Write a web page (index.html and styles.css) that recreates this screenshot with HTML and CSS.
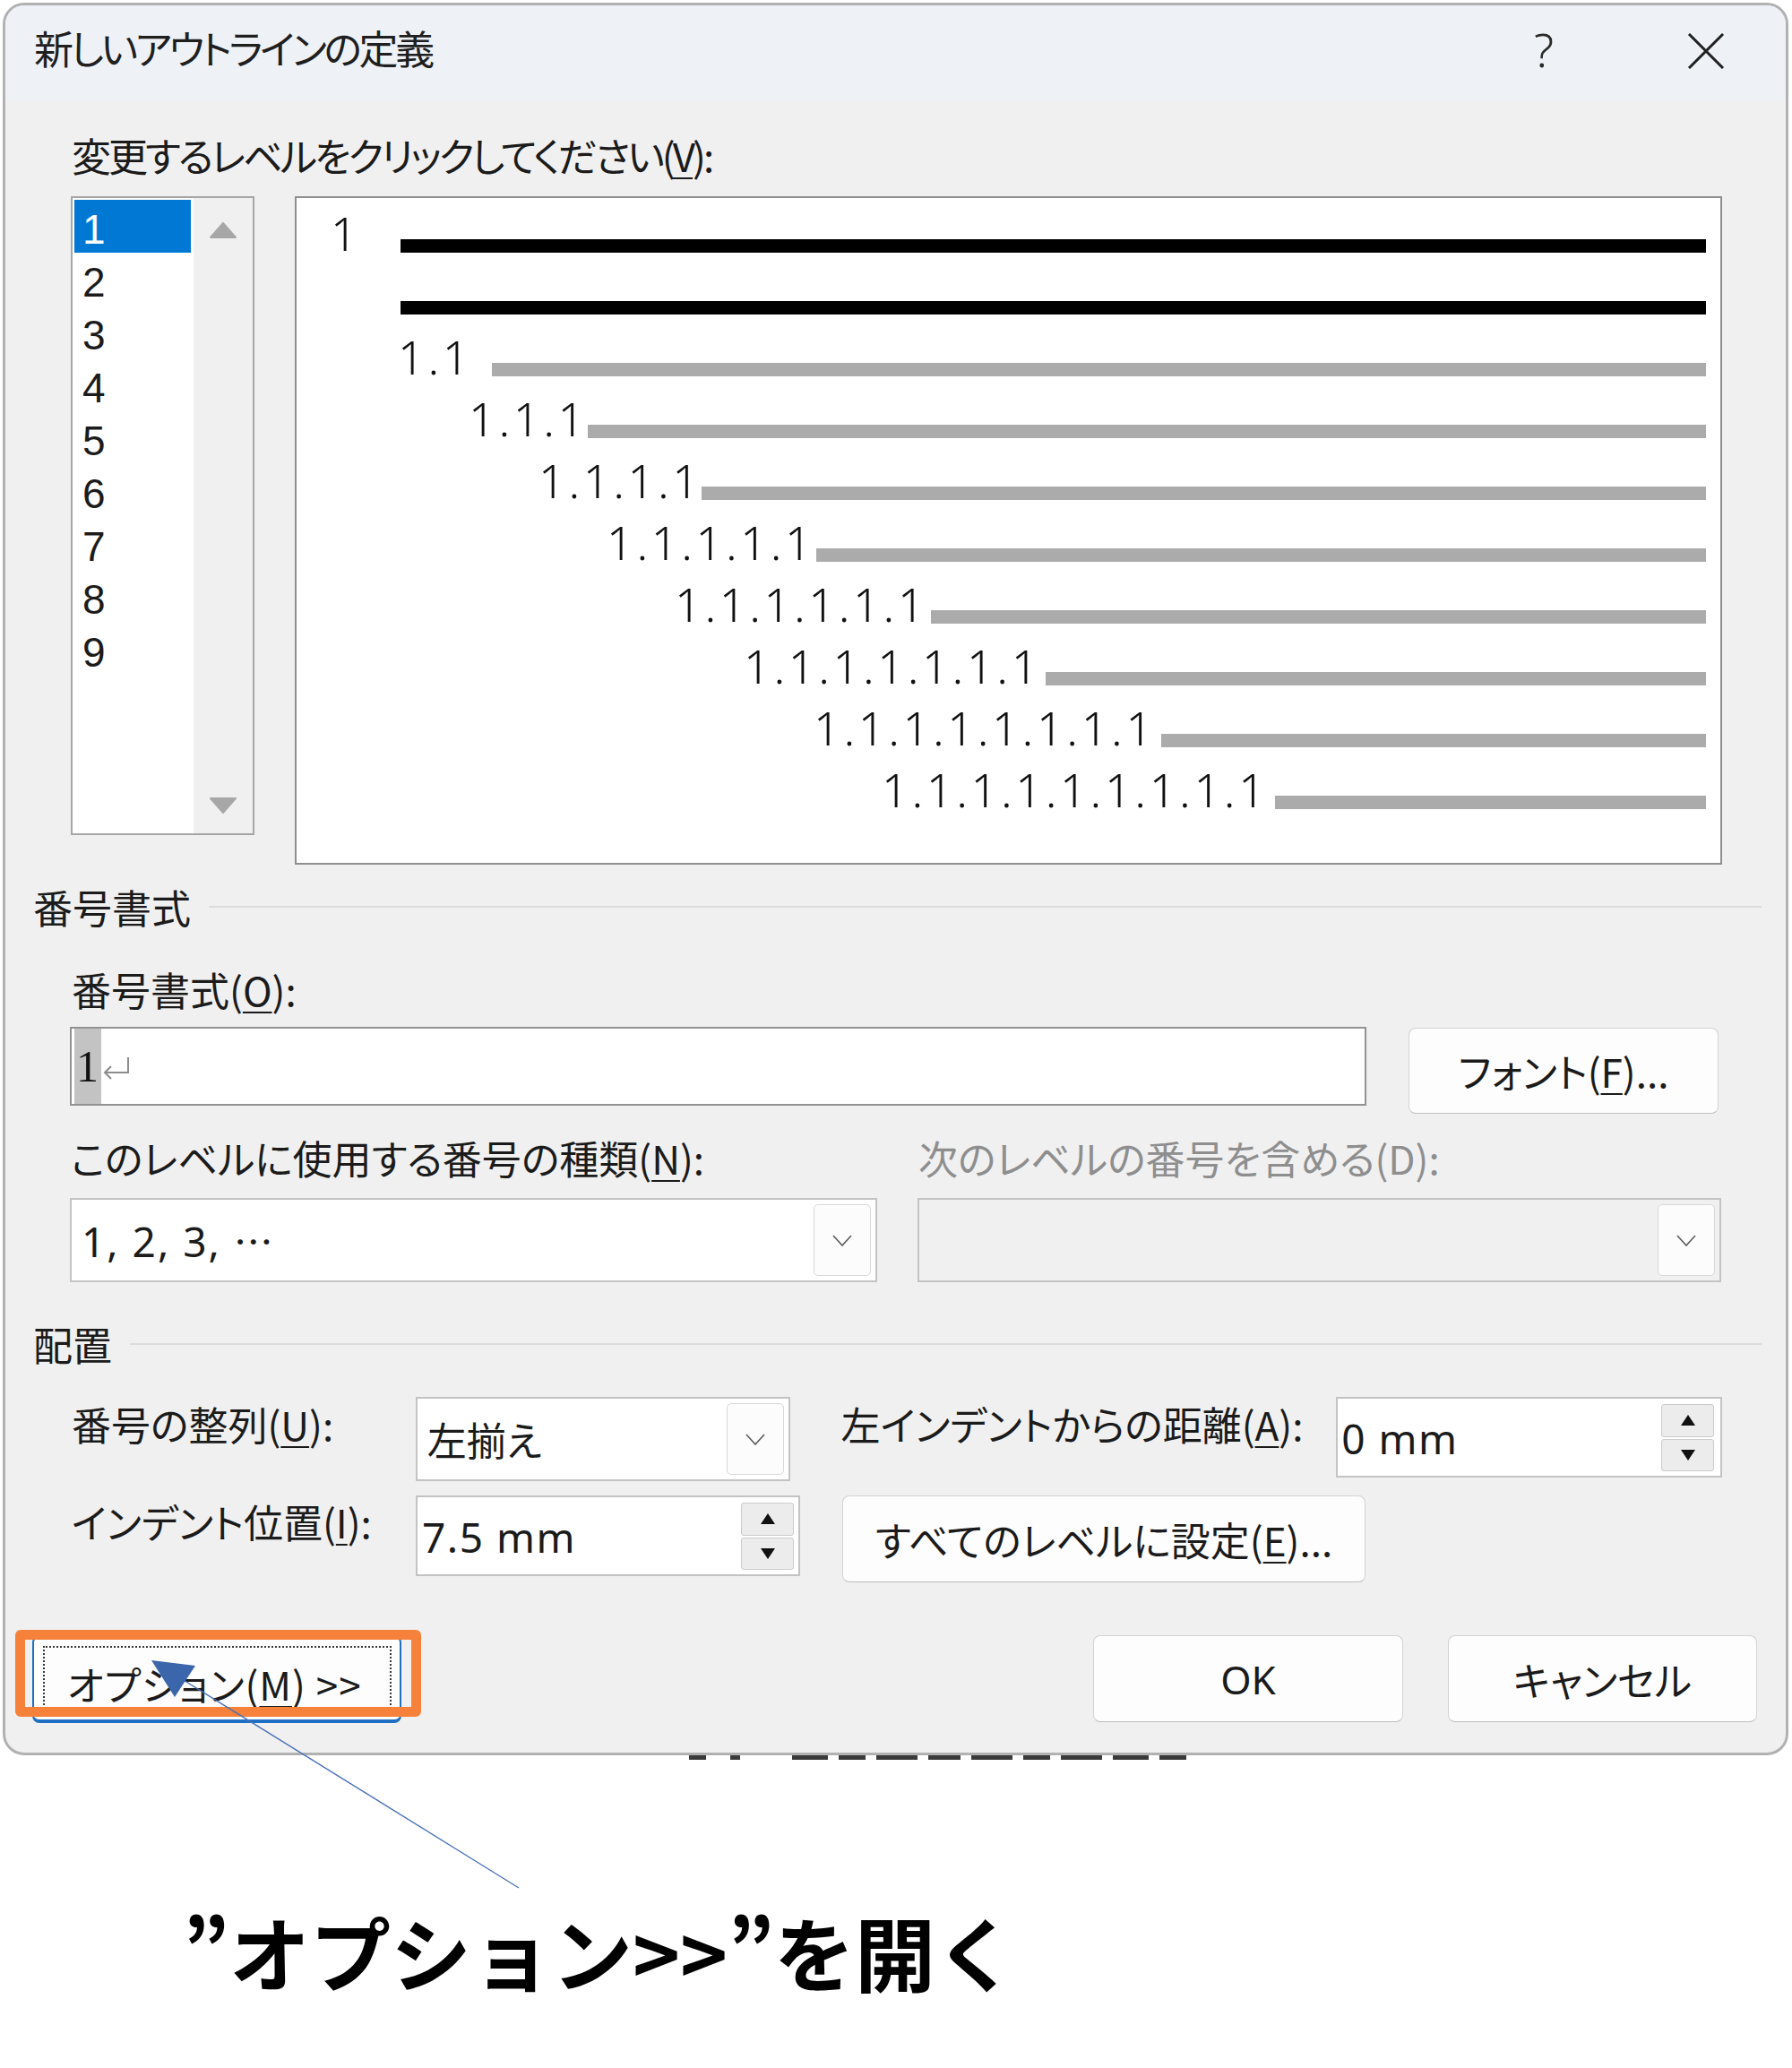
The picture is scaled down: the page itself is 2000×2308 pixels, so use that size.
FILE: index.html
```html
<!DOCTYPE html>
<html lang="ja">
<head>
<meta charset="utf-8">
<title>新しいアウトラインの定義</title>
<link rel="stylesheet" href="styles.css">
</head>
<body>
<div class="page">
  <div class="dialog">
    <div class="titlebar">
      <span class="title">新しいアウトラインの定義</span>
      <span class="help">?</span>
      <svg class="close" width="42" height="40" viewBox="0 0 42 40"><path d="M2 1 L40 39 M40 1 L2 39" stroke="#202020" stroke-width="3" fill="none"/></svg>
    </div>
    <div class="body">
      <div class="lbl first">変更するレベルをクリックしてください(<u>V</u>):</div>
      <div class="level-row">
        <div class="listbox">
          <div class="items">
            <div class="item sel">1</div>
            <div class="item">2</div>
            <div class="item">3</div>
            <div class="item">4</div>
            <div class="item">5</div>
            <div class="item">6</div>
            <div class="item">7</div>
            <div class="item">8</div>
            <div class="item">9</div>
          </div>
          <div class="vscroll">
            <svg width="30" height="18" viewBox="0 0 30 18"><path d="M15 1 L29 17 L1 17 Z" fill="#a7a7a7" stroke="#a7a7a7" stroke-width="2" stroke-linejoin="round"/></svg>
            <svg width="30" height="18" viewBox="0 0 30 18"><path d="M1 1 L29 1 L15 17 Z" fill="#a7a7a7" stroke="#a7a7a7" stroke-width="2" stroke-linejoin="round"/></svg>
          </div>
        </div>
        <div class="preview">
          <div class="prow r1"><span class="num">1</span><i class="bar k"></i></div>
          <div class="prow r2"><i class="bar k"></i></div>
          <div class="prow r3"><span class="num">1.1</span><i class="bar"></i></div>
          <div class="prow r4"><span class="num">1.1.1</span><i class="bar"></i></div>
          <div class="prow r5"><span class="num">1.1.1.1</span><i class="bar"></i></div>
          <div class="prow r6"><span class="num">1.1.1.1.1</span><i class="bar"></i></div>
          <div class="prow r7"><span class="num">1.1.1.1.1.1</span><i class="bar"></i></div>
          <div class="prow r8"><span class="num">1.1.1.1.1.1.1</span><i class="bar"></i></div>
          <div class="prow r9"><span class="num">1.1.1.1.1.1.1.1</span><i class="bar"></i></div>
          <div class="prow r10"><span class="num">1.1.1.1.1.1.1.1.1</span><i class="bar"></i></div>
        </div>
      </div>

      <div class="grp g1"><span>番号書式</span><i class="rule"></i></div>
      <div class="lbl l-fmt">番号書式(<u>O</u>):</div>
      <div class="fmt-row">
        <div class="fmt-input">
          <span class="hl">1</span>
          <svg class="ret" width="34" height="28" viewBox="0 0 34 28"><path d="M30 2 V19 H4 M11 12 L4 19 L11 26" stroke="#8c8c8c" stroke-width="2" fill="none"/></svg>
        </div>
        <div class="btn font-btn">フォント(<u>F</u>)...</div>
      </div>

      <div class="two-col">
        <div class="col">
          <div class="lbl">このレベルに使用する番号の種類(<u>N</u>):</div>
          <div class="combo wide">
            <span class="val latin">1, 2, 3, <span class="cjk">…</span></span>
            <span class="drop"><svg width="22" height="13" viewBox="0 0 22 13"><path d="M1 1 L11 12 L21 1" stroke="#5a5a5a" stroke-width="1.6" fill="none"/></svg></span>
          </div>
        </div>
        <div class="col">
          <div class="lbl dis">次のレベルの番号を含める(D):</div>
          <div class="combo wide disabled">
            <span class="val"></span>
            <span class="drop"><svg width="22" height="13" viewBox="0 0 22 13"><path d="M1 1 L11 12 L21 1" stroke="#5a5a5a" stroke-width="1.6" fill="none"/></svg></span>
          </div>
        </div>
      </div>

      <div class="grp g2"><span>配置</span><i class="rule"></i></div>

      <div class="pos-row ra">
        <div class="lbl plbl">番号の整列(<u>U</u>):</div>
        <div class="combo align">
          <span class="val">左揃え</span>
          <span class="drop"><svg width="22" height="13" viewBox="0 0 22 13"><path d="M1 1 L11 12 L21 1" stroke="#5a5a5a" stroke-width="1.6" fill="none"/></svg></span>
        </div>
        <div class="lbl plbl2">左インデントからの距離(<u>A</u>):</div>
        <div class="spin s-left">
          <span class="val">0 mm</span>
          <span class="btns">
            <span class="sb"><svg width="16" height="12" viewBox="0 0 16 12"><path d="M8 0 L16 12 L0 12 Z" fill="#111"/></svg></span>
            <span class="sb"><svg width="16" height="12" viewBox="0 0 16 12"><path d="M0 0 L16 0 L8 12 Z" fill="#111"/></svg></span>
          </span>
        </div>
      </div>

      <div class="pos-row rb">
        <div class="lbl plbl pb">インデント位置(<u>I</u>):</div>
        <div class="spin s-ind">
          <span class="val">7.5 mm</span>
          <span class="btns">
            <span class="sb"><svg width="16" height="12" viewBox="0 0 16 12"><path d="M8 0 L16 12 L0 12 Z" fill="#111"/></svg></span>
            <span class="sb"><svg width="16" height="12" viewBox="0 0 16 12"><path d="M0 0 L16 0 L8 12 Z" fill="#111"/></svg></span>
          </span>
        </div>
        <div class="btn all-btn">すべてのレベルに設定(<u>E</u>)...</div>
      </div>

      <div class="btn-row">
        <div class="btn opt-btn"><span class="focus">オプション(<u>M</u>) &gt;&gt;</span></div>
        <div class="btn ok-btn">OK</div>
        <div class="btn cancel-btn">キャンセル</div>
      </div>
    </div>
  </div>

  <div class="under">
    <i class="mk w19"></i><i class="mk w11 g27"></i><i class="mk w40 g58"></i><i class="mk w30"></i><i class="mk w46"></i><i class="mk w36"></i><i class="mk w46"></i><i class="mk w30"></i><i class="mk w46"></i><i class="mk w40"></i><i class="mk w30"></i>
  </div>

  <div class="caption">”オプション&gt;&gt;”を開く</div>

  <div class="hl-box"></div>
  <svg class="pointer" width="2000" height="2308" viewBox="0 0 2000 2308">
    <line x1="579" y1="2107" x2="195" y2="1869" stroke="#4a72b8" stroke-width="1.4"/>
    <polygon points="169,1853 218,1859 195,1894" fill="#3b66ab"/>
  </svg>
</div>
</body>
</html>
```

FILE: styles.css
```css
html, body {
  margin: 0;
  padding: 0;
  background: #ffffff;
}

body {
  font-family: "Noto Sans CJK JP", "Noto Sans", sans-serif;
}

.page {
  position: relative;
  width: 2000px;
  height: 2308px;
  overflow: hidden;
}

.dialog {
  margin: 3px 0 0 3px;
  width: 1993px;
  height: 1956px;
  box-sizing: border-box;
  border: 3px solid #b1b1b1;
  border-radius: 24px;
  background: #f0f0f0;
  overflow: hidden;
  font-size: 44px;
  color: #1b1b1b;
  font-feature-settings: "palt" 1;
}

.titlebar {
  height: 107px;
  box-sizing: border-box;
  background: #eef2f7;
  display: flex;
  align-items: flex-start;
  padding: 19px 68px 0 32px;
}

.title {
  flex: 1;
  line-height: 56px;
  color: #1f1f1f;
  letter-spacing: -3.3px;
}

.help {
  width: 30px;
  margin-right: 141px;
  font-family: "Noto Sans", sans-serif;
  font-weight: 300;
  font-size: 52px;
  line-height: 60px;
  color: #2a2a2a;
}

.close {
  margin-top: 12px;
  display: block;
}

.body {
  padding: 0 71px 0 73px;
}

u {
  text-decoration: underline;
  text-decoration-thickness: 2px;
  text-underline-offset: 6px;
}

.lbl {
  line-height: 56px;
  white-space: nowrap;
}

.lbl.first {
  margin-top: 32px;
  padding-left: 1px;
  letter-spacing: -3px;
}

.lbl.dis {
  color: #8e8e8e;
}

/* level list + preview */
.level-row {
  display: flex;
  align-items: flex-start;
  margin-top: 18px;
}

.listbox {
  width: 205px;
  height: 713px;
  box-sizing: border-box;
  border: 2px solid #a6a6a6;
  background: #ffffff;
  display: flex;
}

.items {
  width: 130px;
  margin: 2px 0 0 2px;
}

.item {
  height: 59px;
  box-sizing: border-box;
  padding: 7px 0 0 9px;
  line-height: 52px;
  font-family: "Liberation Sans", Arial, sans-serif;
  font-size: 46px;
  color: #1b1b1b;
}

.item.sel {
  background: #0078d4;
  color: #ffffff;
}

.vscroll {
  width: 66px;
  margin-left: 3px;
  background: #f0f0f0;
  display: flex;
  flex-direction: column;
  justify-content: space-between;
  align-items: center;
  padding: 27px 0 22px;
  box-sizing: border-box;
}

.vscroll svg {
  display: block;
}

.preview {
  width: 1593px;
  height: 746px;
  box-sizing: border-box;
  border: 2px solid #8f8f8f;
  background: #ffffff;
  margin-left: 45px;
  padding-right: 16px;
}

.prow {
  height: 69px;
  box-sizing: border-box;
  display: flex;
  align-items: flex-end;
  padding-bottom: 8px;
}

.num {
  flex: none;
  font-family: "Noto Sans", sans-serif;
  font-weight: 300;
  font-size: 52px;
  line-height: 1;
  letter-spacing: 3.7px;
  white-space: nowrap;
  margin-bottom: -4px;
  color: #111;
}

.bar {
  display: block;
  flex: 1;
  height: 15px;
  background: #ababab;
}

.bar.k {
  background: #000000;
}

.r1 { padding-left: 38px; }
.r1 .num { width: 78px; }
.r2 { padding-left: 116px; }
.r3 { padding-left: 113px; }
.r3 .num { width: 105px; }
.r4 { padding-left: 192px; }
.r4 .num { width: 133px; }
.r5 { padding-left: 270px; }
.r5 .num { width: 182px; }
.r6 { padding-left: 346px; }
.r6 .num { width: 234px; }
.r7 { padding-left: 422px; }
.r7 .num { width: 286px; }
.r8 { padding-left: 499px; }
.r8 .num { width: 337px; }
.r9 { padding-left: 577px; }
.r9 .num { width: 388px; }
.r10 { padding-left: 653px; }
.r10 .num { width: 439px; }

/* group headings */
.grp {
  display: flex;
  align-items: center;
  line-height: 56px;
  margin: 0 -44px 0 -42px;
}

.grp .rule {
  flex: 1;
  height: 2px;
  background: #dcdcdc;
  margin-left: 20px;
}

.grp.g1 {
  margin-top: 19px;
}

.grp.g2 {
  margin-top: 41px;
}

.l-fmt {
  margin-top: 36px;
  padding-left: 1px;
}

/* number format row */
.fmt-row {
  display: flex;
  align-items: flex-start;
  margin-top: 14px;
  margin-left: -1px;
}

.fmt-input {
  width: 1447px;
  height: 88px;
  box-sizing: border-box;
  border: 2px solid #929292;
  background: #ffffff;
  display: flex;
  align-items: stretch;
  padding: 0 0 0 3px;
}

.fmt-input .hl {
  width: 30px;
  background: #c3c3c3;
  font-family: "Liberation Serif", serif;
  font-size: 50px;
  line-height: 84px;
  color: #111;
  padding-left: 2px;
  box-sizing: border-box;
}

.fmt-input .ret {
  align-self: center;
  margin: 4px 0 0 0;
  display: block;
}

.btn {
  box-sizing: border-box;
  background: #fdfdfd;
  border: 1px solid #d3d3d3;
  border-bottom-color: #bdbdbd;
  border-radius: 8px;
  display: flex;
  align-items: center;
  justify-content: center;
  white-space: nowrap;
  color: #1b1b1b;
}

.font-btn {
  width: 346px;
  height: 96px;
  margin: 1px 0 0 47px;
}

/* two columns */
.two-col {
  display: grid;
  grid-template-columns: 901px 897px;
  column-gap: 45px;
  margin-top: 21px;
  margin-left: -1px;
}

.two-col .lbl {
  padding-left: 1px;
}

.combo {
  height: 94px;
  box-sizing: border-box;
  border: 2px solid #c3c3c3;
  background: #ffffff;
  display: flex;
  align-items: center;
  padding: 5px;
}

.combo.wide {
  margin-top: 17px;
}

.combo.disabled {
  background: #f0f0f0;
}

.combo .val {
  flex: 1;
  padding-left: 7px;
  white-space: nowrap;
}

.combo .val.latin {
  font-family: "Noto Sans", sans-serif;
  font-size: 46px;
  letter-spacing: 2px;
  padding-left: 6px;
}

.cjk {
  font-family: "Noto Sans CJK JP", sans-serif;
  font-size: 44px;
  letter-spacing: 0;
}

.combo .drop {
  width: 64px;
  align-self: stretch;
  box-sizing: border-box;
  border: 1px solid #d8d8d8;
  border-radius: 5px;
  background: #fcfcfc;
  display: flex;
  align-items: center;
  justify-content: center;
}

/* position rows */
.pos-row {
  display: flex;
  align-items: flex-start;
}

.pos-row.ra {
  margin-top: 31px;
}

.pos-row.rb {
  margin-top: 16px;
}

.plbl {
  width: 385px;
  margin-top: 2px;
  padding-left: 1px;
  box-sizing: border-box;
}

.plbl.pb {
  margin-top: 1px;
}

.combo.align {
  width: 418px;
}

.combo.align .val {
  padding-left: 6px;
}

.plbl2 {
  width: 553px;
  margin: 2px 0 0 57px;
}

.spin {
  height: 90px;
  box-sizing: border-box;
  border: 2px solid #c3c3c3;
  background: #ffffff;
  display: flex;
  align-items: stretch;
}

.spin .val {
  flex: 1;
  align-self: center;
  white-space: nowrap;
  font-family: "Noto Sans", sans-serif;
  font-size: 46px;
  letter-spacing: 1.5px;
}

.spin .btns {
  width: 59px;
  display: flex;
  flex-direction: column;
  gap: 2px;
}

.spin .sb {
  flex: 1;
  box-sizing: border-box;
  background: #ececec;
  border: 1px solid #cbcbcb;
  border-radius: 3px;
  display: flex;
  align-items: center;
  justify-content: center;
}

.s-left {
  width: 431px;
  padding: 6px 7px 5px 0;
}

.s-left .val {
  padding-left: 4px;
}

.s-ind {
  width: 429px;
  padding: 6px 5px 5px 0;
}

.s-ind .val {
  padding-left: 5px;
}

.all-btn {
  width: 584px;
  height: 97px;
  margin-left: 47px;
}

/* bottom buttons */
.btn-row {
  display: flex;
  align-items: flex-start;
  margin: 59px -39px 0 -43px;
}

.opt-btn {
  width: 412px;
  height: 98px;
  border: 2px solid #1f6fc5;
  border-bottom-width: 4px;
  align-items: stretch;
  justify-content: flex-start;
}

.opt-btn .focus {
  flex: 1;
  margin: 10px 9px 4px 10px;
  border: 2px dotted #3a3a3a;
  border-bottom: none;
  display: flex;
  align-items: center;
  padding-left: 25px;
  padding-top: 4px;
  letter-spacing: 1px;
}

.ok-btn {
  width: 346px;
  height: 97px;
  margin-left: auto;
  font-family: "Noto Sans", sans-serif;
}

.cancel-btn {
  width: 345px;
  height: 97px;
  margin-left: 50px;
}

/* glimpse of the document beneath the dialog */
.under {
  height: 9px;
  display: flex;
  align-items: flex-start;
  padding-left: 769px;
}

.mk {
  display: block;
  height: 5px;
  background: #3a3a3a;
  margin-left: 12px;
}

.mk:first-child {
  margin-left: 0;
}

.mk.w19 { width: 19px; }
.mk.w11 { width: 11px; }
.mk.w30 { width: 30px; }
.mk.w36 { width: 36px; }
.mk.w40 { width: 40px; }
.mk.w46 { width: 46px; }
.mk.g27 { margin-left: 27px; }
.mk.g58 { margin-left: 58px; }

/* caption */
.caption {
  margin-top: 155px;
  padding-left: 204px;
  font-family: "Noto Sans CJK JP", sans-serif;
  font-weight: 700;
  font-size: 90px;
  line-height: 108px;
  color: #000000;
  white-space: nowrap;
}

/* annotation overlays */
.hl-box {
  position: absolute;
  left: 17px;
  top: 1819px;
  width: 453px;
  height: 97px;
  box-sizing: border-box;
  border: 11px solid #f5813a;
  border-radius: 6px;
}

.pointer {
  position: absolute;
  left: 0;
  top: 0;
  pointer-events: none;
}
```
